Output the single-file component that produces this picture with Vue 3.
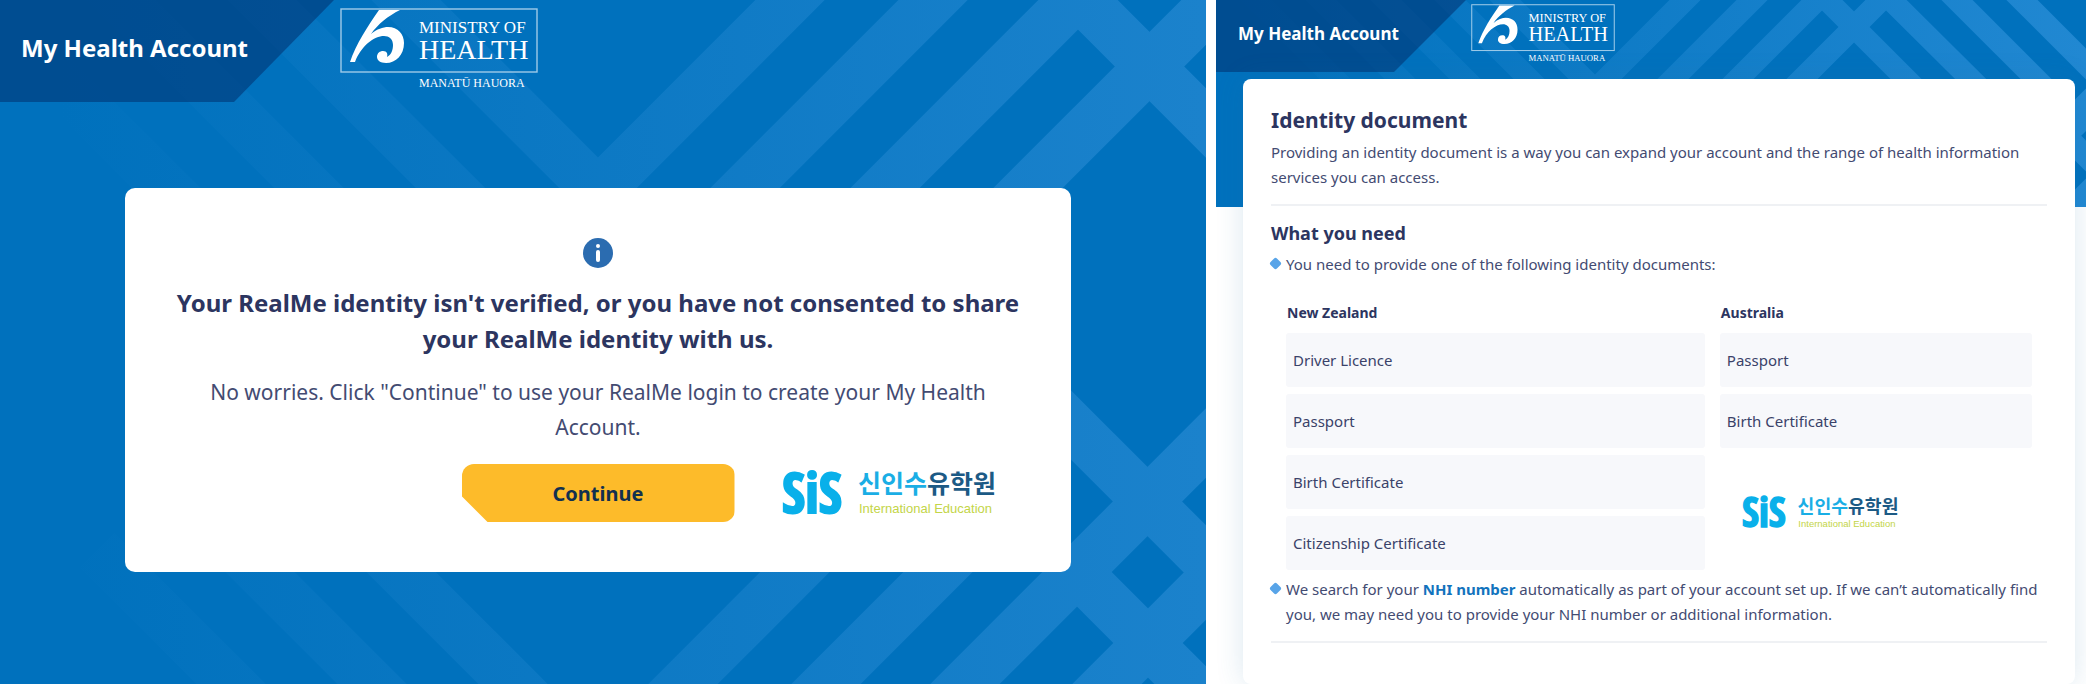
<script setup>
import { ref } from 'vue'

// 身份证件列表
const newZealand = ref(['Driver Licence', 'Passport', 'Birth Certificate', 'Citizenship Certificate'])
const australia = ref(['Passport', 'Birth Certificate'])

// 左侧背景条纹
const leftBands = [
    'M366 -40 L598 192 L830 -40',
    'M222 -40 L598 335 L973 -40',
    'M81 -40 L400 279',
    'M-62 -40 L300 322',
    'M850 223 L1078 -5 L1246 163',
    'M1000 216 L1256 -40',
    'M380 551 L553 724',
    'M238 550 L412 724',
    'M97 550 L271 724',
    'M830 537 L643 724',
    'M960 550 L786 724',
    'M1246 403 L925 724',
    'M1077 572 L1229 724',
    'M1050 404 L1246 600',
    'M1246 545 L1067 724'
]

// 右侧背景条纹
const rightBands = [
    'M0 -40 L170 130',
    'M65 -40 L235 130',
    'M130 -40 L300 130',
    'M194 -40 L364 130',
    'M249 -40 L379 90 L509 -40',
    'M576 -40 L406 130',
    'M471 130 L606 -5 L741 130',
    'M535 130 L670 -5 L806 130',
    'M701 -40 L871 130',
    'M766 -40 L910 104',
    'M890 84 L840 134',
    'M830 116 L890 176',
    'M890 174 L840 224'
]
</script>

<template>
    <div class="page">
        <!-- RealMe 提示 -->
        <section class="panel notice">
            <svg class="pattern" viewBox="0 0 1206 684" preserveAspectRatio="xMinYMin slice" aria-hidden="true">
                <defs>
                    <linearGradient id="fadeLeft" gradientUnits="userSpaceOnUse" x1="0" y1="0" x2="1206" y2="0">
                        <stop offset="0.05" stop-color="#0071bd" />
                        <stop offset="1" stop-color="#1b82cc" />
                    </linearGradient>
                </defs>
                <path v-for="band in leftBands" :key="band" :d="band" fill="none" stroke="url(#fadeLeft)"
                    stroke-width="49" />
            </svg>
            <header class="header">
                <div class="brand">My Health Account</div>
                <svg class="ministry" viewBox="0 0 198 84" role="img">
                    <rect x="1" y="1" width="196" height="63" fill="none" stroke="#9fcbe9" stroke-width="1.4" />
                    <path fill="#fff" transform="translate(-340 -8)"
                        d="M379 10 L400 10 C388 16 378 24 371 34 C377 29 383 27 388 27 C398 27 404 34 404 43 C404 55 396 63 386 63 C380 63 377 60 377 57 C377 53 380 51 383 51 C387 51 388 54 387 57 C391 55 393 50 393 45 C393 39 389 36 384 36 C374 36 361 46 355 62 L350 62 C356 44 368 26 379 10 Z" />
                    <text x="79" y="25" font-size="17">MINISTRY OF</text>
                    <text x="79" y="51" font-size="28">HEALTH</text>
                    <text x="79" y="79" font-size="12">MANATŪ HAUORA</text>
                </svg>
            </header>
            <main class="dialog">
                <svg class="info" viewBox="0 0 30 30" aria-hidden="true">
                    <circle cx="15" cy="15" r="15" fill="#2b6cb0" />
                    <circle cx="15" cy="8" r="2" fill="#fff" />
                    <rect x="13" y="12" width="4" height="12" rx="2" fill="#fff" />
                </svg>
                <h1>Your RealMe identity isn't verified, or you have not consented to share your RealMe identity with
                    us.</h1>
                <p>No worries. Click "Continue" to use your RealMe login to create your My Health Account.</p>
                <div class="actions">
                    <button type="button">Continue</button>
                    <svg class="sis" viewBox="0 0 216 46" role="img">
                        <text class="sis-mark" x="0" y="43">SiS</text>
                        <text class="sis-name" x="76" y="23"><tspan fill="#1aaee5">신인수</tspan><tspan
                                fill="#1c5a85">유학원</tspan></text>
                        <text class="sis-sub" x="77" y="43">International Education</text>
                    </svg>
                </div>
            </main>
        </section>

        <!-- 证件要求 -->
        <section class="panel document">
            <div class="banner">
                <svg class="pattern" viewBox="0 0 870 207" preserveAspectRatio="xMinYMin slice" aria-hidden="true">
                    <defs>
                        <linearGradient id="fadeRight" gradientUnits="userSpaceOnUse" x1="0" y1="0" x2="870" y2="0">
                            <stop offset="0" stop-color="#0071bd" />
                            <stop offset="1" stop-color="#2188d2" />
                        </linearGradient>
                    </defs>
                    <path v-for="band in rightBands" :key="band" :d="band" fill="none" stroke="url(#fadeRight)"
                        stroke-width="22" />
                </svg>
            </div>
            <header class="header">
                <div class="brand">My Health Account</div>
                <svg class="ministry" viewBox="0 0 198 84" role="img">
                    <rect x="1" y="1" width="196" height="63" fill="none" stroke="#9fcbe9" stroke-width="1.4" />
                    <path fill="#fff" transform="translate(-340 -8)"
                        d="M379 10 L400 10 C388 16 378 24 371 34 C377 29 383 27 388 27 C398 27 404 34 404 43 C404 55 396 63 386 63 C380 63 377 60 377 57 C377 53 380 51 383 51 C387 51 388 54 387 57 C391 55 393 50 393 45 C393 39 389 36 384 36 C374 36 361 46 355 62 L350 62 C356 44 368 26 379 10 Z" />
                    <text x="79" y="25" font-size="17">MINISTRY OF</text>
                    <text x="79" y="51" font-size="28">HEALTH</text>
                    <text x="79" y="79" font-size="12">MANATŪ HAUORA</text>
                </svg>
            </header>
            <main class="sheet">
                <h1>Identity document</h1>
                <p class="intro">Providing an identity document is a way you can expand your account and the range of
                    health information services you can access.</p>
                <hr>
                <h2>What you need</h2>
                <ul>
                    <li>
                        <p>You need to provide one of the following identity documents:</p>
                        <table>
                            <thead>
                                <tr>
                                    <th class="nz">New Zealand</th>
                                    <th>Australia</th>
                                </tr>
                            </thead>
                            <tbody>
                                <!-- 澳大利亚只有两项，其余位置放标志 -->
                                <tr v-for="(item, i) in newZealand" :key="item">
                                    <td>{{ item }}</td>
                                    <td v-if="australia[i]">{{ australia[i] }}</td>
                                    <td v-else-if="i === australia.length" class="logo-cell" rowspan="2">
                                        <svg class="sis" viewBox="0 0 216 46" role="img">
                                            <text class="sis-mark" x="0" y="43">SiS</text>
                                            <text class="sis-name" x="76" y="23"><tspan
                                                    fill="#1aaee5">신인수</tspan><tspan fill="#1c5a85">유학원</tspan></text>
                                            <text class="sis-sub" x="77" y="43">International Education</text>
                                        </svg>
                                    </td>
                                </tr>
                            </tbody>
                        </table>
                    </li>
                    <li>
                        <p>We search for your <a href="#">NHI number</a> automatically as part of your account set up.
                            If we can’t automatically find you, we may need you to provide your NHI number or additional
                            information.</p>
                    </li>
                </ul>
                <hr>
            </main>
        </section>
    </div>
</template>

<style>
body {
    margin: 0;
    background: #fff;
}
</style>

<style scoped>
* {
    box-sizing: border-box;
}

.page {
    display: flex;
    gap: 10px;
    min-height: 100vh;
    font-family: "Noto Sans", "Noto Sans CJK KR", sans-serif;
    color: #2c3560;
}

h1,
h2,
p,
ul {
    margin: 0;
    padding: 0;
}

.panel {
    position: relative;
    display: flex;
    flex-direction: column;
    min-width: 0;
    overflow: hidden;
}

.notice {
    flex: 1206 1 0;
    background: #0071bd;
}

.document {
    flex: 870 1 0;
}

.banner {
    position: absolute;
    top: 0;
    left: 0;
    width: 100%;
    height: 207px;
    background: #0071bd;
}

.pattern {
    position: absolute;
    top: 0;
    left: 0;
    width: 100%;
    height: 100%;
}

.header {
    position: relative;
    display: flex;
    align-items: flex-start;
}

.brand {
    display: flex;
    align-items: center;
    color: #fff;
    font-weight: 700;
    white-space: nowrap;
    background: rgba(0, 48, 110, 0.55);
}

.notice .brand {
    width: 334px;
    height: 102px;
    padding: 0 0 8px 21px;
    font-size: 24px;
    clip-path: polygon(0 0, 100% 0, calc(100% - 100px) 100%, 0 100%);
}

.document .brand {
    width: 250px;
    height: 72px;
    padding: 0 0 6px 22px;
    font-size: 17px;
    clip-path: polygon(0 0, 100% 0, calc(100% - 72px) 100%, 0 100%);
}

.ministry {
    flex: none;
    font-family: "Liberation Serif", serif;
    fill: #fff;
}

.notice .ministry {
    width: 198px;
    margin: 8px 0 0 6px;
}

.document .ministry {
    width: 144px;
    margin: 4px 0 0 5px;
}

.dialog {
    position: relative;
    margin: 86px 135px 0 125px;
    padding: 50px 40px;
    border-radius: 10px;
    background: #fff;
    text-align: center;
}

.info {
    display: block;
    width: 30px;
    margin: 0 auto 17px;
}

.dialog h1 {
    font-size: 24px;
    line-height: 36px;
}

.dialog p {
    margin-top: 18px;
    padding: 0 40px;
    font-size: 21px;
    line-height: 35px;
    color: #434b72;
}

.actions {
    display: grid;
    grid-template-columns: 1fr 273px 1fr;
    align-items: center;
    margin-top: 19px;
}

button {
    grid-column: 2;
    height: 58px;
    border: 0;
    border-radius: 12px;
    background: #fdbb2a;
    color: #12304f;
    font: 700 20px "Noto Sans", sans-serif;
    clip-path: polygon(0 0, 100% 0, 100% 100%, 26px 100%, 0 32px);
}

.sis {
    display: block;
    overflow: visible;
}

.actions .sis {
    width: 216px;
    margin-left: 47px;
}

.sis-mark {
    font: 700 56px "Open Sans Condensed", "Noto Sans Condensed", "Noto Sans", sans-serif;
    fill: #09b0ea;
    stroke: #09b0ea;
    stroke-width: 2;
}

.sis-name {
    font: 700 25px "Noto Sans CJK KR", sans-serif;
}

.sis-sub {
    font: 13px "Liberation Sans", sans-serif;
    fill: #c3d548;
}

.sheet {
    position: relative;
    flex: 1;
    margin: 7px 11px 0 27px;
    padding: 25px 28px 16px;
    border-radius: 8px;
    background: #fff;
    box-shadow: 0 0 28px rgba(40, 110, 160, 0.16);
    font-size: 15px;
    line-height: 25px;
}

.sheet h1 {
    font-size: 21px;
    line-height: 32px;
}

.sheet p {
    color: #434b72;
}

.intro {
    margin-top: 4px;
}

hr {
    height: 2px;
    margin: 14px 0;
    border: 0;
    background: #eff1f4;
}

.sheet h2 {
    font-size: 18px;
    line-height: 26px;
}

ul {
    margin-top: 6px;
    list-style: none;
}

li {
    position: relative;
}

li p {
    padding-left: 15px;
}

/* 菱形项目符号 */
li::before {
    content: "";
    position: absolute;
    left: 0;
    top: 7px;
    width: 9px;
    height: 9px;
    border-radius: 2px;
    background: #58a4e8;
    transform: rotate(45deg);
}

a {
    color: #1273bd;
    font-weight: 700;
    text-decoration: none;
}

table {
    width: 100%;
    margin-top: 15px;
    border-spacing: 15px 7px;
    table-layout: fixed;
}

th {
    height: 27px;
    padding: 0 1px;
    font-size: 14px;
    text-align: left;
}

.nz {
    width: 57.3%;
}

td {
    height: 54px;
    padding: 0 7px;
    border-radius: 3px;
    background: #f7f8fb;
    color: #3a4269;
}

.logo-cell {
    padding-left: 22px;
    background: none;
}

.logo-cell .sis {
    width: 158px;
}
</style>
